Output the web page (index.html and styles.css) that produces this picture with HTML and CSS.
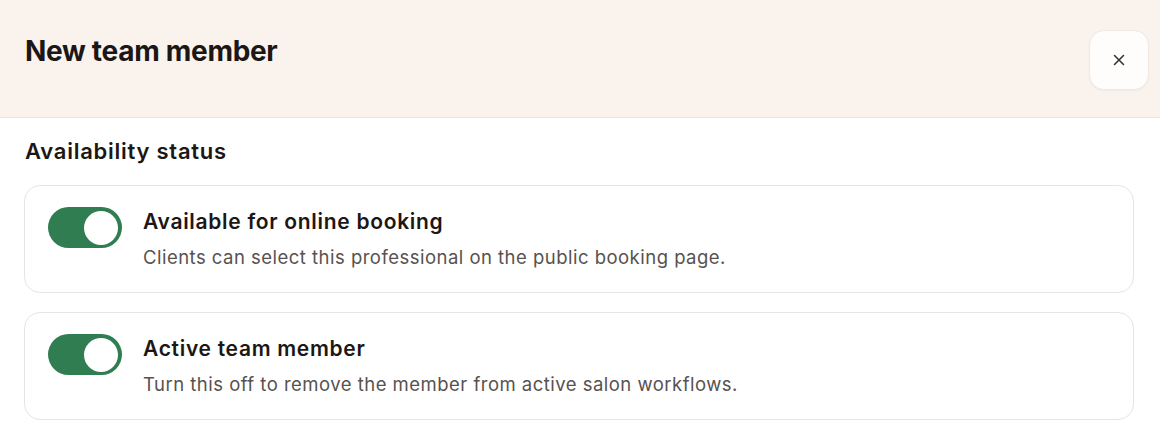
FILE: index.html
```html
<!DOCTYPE html>
<html lang="en">
<head>
<meta charset="utf-8">
<title>New team member</title>
<link rel="stylesheet" href="styles.css">
</head>
<body>
<div class="sheet">
  <header class="sheet-header">
    <h1 class="sheet-title">New team member</h1>
    <button class="close-btn" type="button" aria-label="Close">
      <svg width="16" height="16" viewBox="0 0 16 16" fill="none" stroke="currentColor" stroke-width="1.6" stroke-linecap="round"><path d="M3.5 3.5l9 9M12.5 3.5l-9 9"/></svg>
    </button>
  </header>
  <section class="sheet-body">
    <h2 class="section-title">Availability status</h2>
    <div class="option-list">
      <div class="option-card">
        <span class="toggle is-on" role="switch" aria-checked="true"><span class="toggle-knob"></span></span>
        <div class="option-text">
          <div class="option-title">Available for online booking</div>
          <div class="option-desc">Clients can select this professional on the public booking page.</div>
        </div>
      </div>
      <div class="option-card">
        <span class="toggle is-on" role="switch" aria-checked="true"><span class="toggle-knob"></span></span>
        <div class="option-text">
          <div class="option-title">Active team member</div>
          <div class="option-desc">Turn this off to remove the member from active salon workflows.</div>
        </div>
      </div>
    </div>
  </section>
</div>
</body>
</html>
```

FILE: styles.css
```css
* { box-sizing: border-box; }

html, body {
  margin: 0;
  padding: 0;
  background: #ffffff;
}

body {
  font-family: Inter, "Noto Sans", "Liberation Sans", sans-serif;
  color: #1c1714;
  width: 1160px;
  height: 440px;
  overflow: hidden;
}

.sheet-header {
  height: 118px;
  background: #f9f2ed;
  border-bottom: 1px solid #e9e4e0;
  display: flex;
  align-items: flex-start;
  justify-content: space-between;
  padding: 30px 11px 0 25px;
}

.sheet-title {
  margin: 3px 0 0;
  font-size: 28px;
  font-weight: 700;
  letter-spacing: -0.3px;
  line-height: 36px;
}

.close-btn {
  width: 60px;
  height: 60px;
  border-radius: 15px;
  border: 1px solid #efe9e4;
  background: #fffdfc;
  color: #3a3330;
  display: flex;
  align-items: center;
  justify-content: center;
  padding: 0;
  box-shadow: 0 1px 2px rgba(60, 40, 20, 0.04);
}

.sheet-body {
  padding: 19px 26px 0 24px;
}

.section-title {
  margin: 0 0 20px 1px;
  font-size: 22px;
  font-weight: 600;
  letter-spacing: 0.75px;
  line-height: 28px;
}

.option-list {
  display: flex;
  flex-direction: column;
  gap: 19px;
}

.option-card {
  height: 108px;
  border: 1px solid #e7e5e3;
  border-radius: 16px;
  display: flex;
  align-items: flex-start;
  gap: 21px;
  padding: 21px 23px 0 23px;
}

.toggle {
  flex: none;
  width: 74px;
  height: 41px;
  border-radius: 21px;
  background: #2f7d50;
  display: flex;
  align-items: center;
  justify-content: flex-end;
  padding: 0 4px;
}

.toggle-knob {
  width: 34px;
  height: 34px;
  border-radius: 50%;
  background: #ffffff;
}

.option-text {
  display: flex;
  flex-direction: column;
  gap: 11px;
  padding-top: 2px;
}

.option-title {
  font-size: 21px;
  font-weight: 600;
  letter-spacing: 0.7px;
  line-height: 26px;
  color: #1c1714;
}

.option-desc {
  font-size: 18.5px;
  font-weight: 400;
  letter-spacing: 0.48px;
  line-height: 22px;
  color: #57524f;
}
```
